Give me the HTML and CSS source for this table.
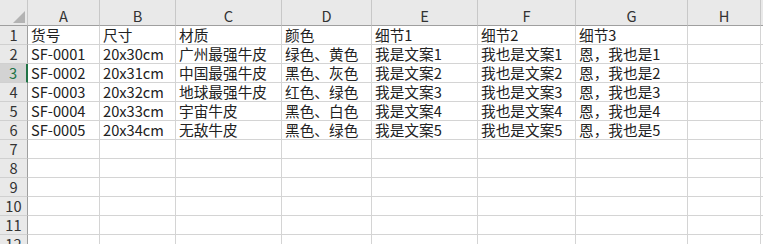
FILE: index.html
```html
<!DOCTYPE html>
<html lang="zh-CN">
<head>
<meta charset="utf-8">
<title>Sheet</title>
<link rel="stylesheet" href="styles.css">
</head>
<body>
<div class="sheet">
  <div class="corner"><span class="tri"></span></div>
  <div class="ch">A</div><div class="ch">B</div><div class="ch">C</div><div class="ch">D</div><div class="ch">E</div><div class="ch">F</div><div class="ch">G</div><div class="ch">H</div><div class="ch last"></div>

  <div class="rh">1</div><div class="c">货号</div><div class="c">尺寸</div><div class="c">材质</div><div class="c">颜色</div><div class="c">细节1</div><div class="c">细节2</div><div class="c">细节3</div><div class="c"></div><div class="c last"></div>
  <div class="rh">2</div><div class="c">SF-0001</div><div class="c">20x30cm</div><div class="c">广州最强牛皮</div><div class="c">绿色、黄色</div><div class="c">我是文案1</div><div class="c">我也是文案1</div><div class="c">恩，我也是1</div><div class="c"></div><div class="c last"></div>
  <div class="rh sel">3</div><div class="c">SF-0002</div><div class="c">20x31cm</div><div class="c">中国最强牛皮</div><div class="c">黑色、灰色</div><div class="c">我是文案2</div><div class="c">我也是文案2</div><div class="c">恩，我也是2</div><div class="c"></div><div class="c last"></div>
  <div class="rh">4</div><div class="c">SF-0003</div><div class="c">20x32cm</div><div class="c">地球最强牛皮</div><div class="c">红色、绿色</div><div class="c">我是文案3</div><div class="c">我也是文案3</div><div class="c">恩，我也是3</div><div class="c"></div><div class="c last"></div>
  <div class="rh">5</div><div class="c">SF-0004</div><div class="c">20x33cm</div><div class="c">宇宙牛皮</div><div class="c">黑色、白色</div><div class="c">我是文案4</div><div class="c">我也是文案4</div><div class="c">恩，我也是4</div><div class="c"></div><div class="c last"></div>
  <div class="rh">6</div><div class="c">SF-0005</div><div class="c">20x34cm</div><div class="c">无敌牛皮</div><div class="c">黑色、绿色</div><div class="c">我是文案5</div><div class="c">我也是文案5</div><div class="c">恩，我也是5</div><div class="c"></div><div class="c last"></div>
  <div class="rh">7</div><div class="c"></div><div class="c"></div><div class="c"></div><div class="c"></div><div class="c"></div><div class="c"></div><div class="c"></div><div class="c"></div><div class="c last"></div>
  <div class="rh">8</div><div class="c"></div><div class="c"></div><div class="c"></div><div class="c"></div><div class="c"></div><div class="c"></div><div class="c"></div><div class="c"></div><div class="c last"></div>
  <div class="rh">9</div><div class="c"></div><div class="c"></div><div class="c"></div><div class="c"></div><div class="c"></div><div class="c"></div><div class="c"></div><div class="c"></div><div class="c last"></div>
  <div class="rh">10</div><div class="c"></div><div class="c"></div><div class="c"></div><div class="c"></div><div class="c"></div><div class="c"></div><div class="c"></div><div class="c"></div><div class="c last"></div>
  <div class="rh">11</div><div class="c"></div><div class="c"></div><div class="c"></div><div class="c"></div><div class="c"></div><div class="c"></div><div class="c"></div><div class="c"></div><div class="c last"></div>
  <div class="rh">12</div><div class="c"></div><div class="c"></div><div class="c"></div><div class="c"></div><div class="c"></div><div class="c"></div><div class="c"></div><div class="c"></div><div class="c last"></div>
</div>
</body>
</html>
```

FILE: styles.css
```css
html, body {
  margin: 0;
  padding: 0;
  background: #ffffff;
  overflow: hidden;
}
.sheet {
  display: grid;
  grid-template-columns: 28px 72px 76px 106px 90px 106px 98px 112px 73px 2px;
  grid-template-rows: 26px repeat(12, 19px);
  width: 763px;
  height: 244px;
  overflow: hidden;
  font-family: "Noto Sans CJK SC", "Liberation Sans", sans-serif;
  font-size: 14.67px;
  color: #222222;
}
.corner {
  background: #e9e9e9;
  border-right: 1px solid #c8c8c8;
  border-bottom: 1px solid #9f9f9f;
  box-sizing: border-box;
  display: flex;
  justify-content: flex-end;
  align-items: flex-end;
  padding: 0 2px 2px 0;
}
.tri {
  width: 0;
  height: 0;
  border-left: 12px solid transparent;
  border-bottom: 12px solid #b3b3b3;
}
.ch {
  background: #e9e9e9;
  border-right: 1px solid #c8c8c8;
  border-bottom: 1px solid #9f9f9f;
  box-sizing: border-box;
  display: flex;
  align-items: center;
  justify-content: center;
  padding-top: 7px;
  color: #333333;
  line-height: 1;
}
.rh {
  background: #e9e9e9;
  border-right: 1px solid #9f9f9f;
  border-bottom: 1px solid #d0d0d0;
  box-sizing: border-box;
  display: flex;
  align-items: center;
  justify-content: center;
  color: #333333;
  line-height: 1;
}
.rh.sel {
  background: #d3d3d3;
  color: #217346;
  border-right: 2px solid #217346;
}
.c {
  border-right: 1px solid #d4d4d4;
  border-bottom: 1px solid #d4d4d4;
  box-sizing: border-box;
  display: flex;
  align-items: center;
  padding-left: 3px;
  white-space: nowrap;
  overflow: visible;
  line-height: 1;
}
.last {
  border-right: none;
}
```
